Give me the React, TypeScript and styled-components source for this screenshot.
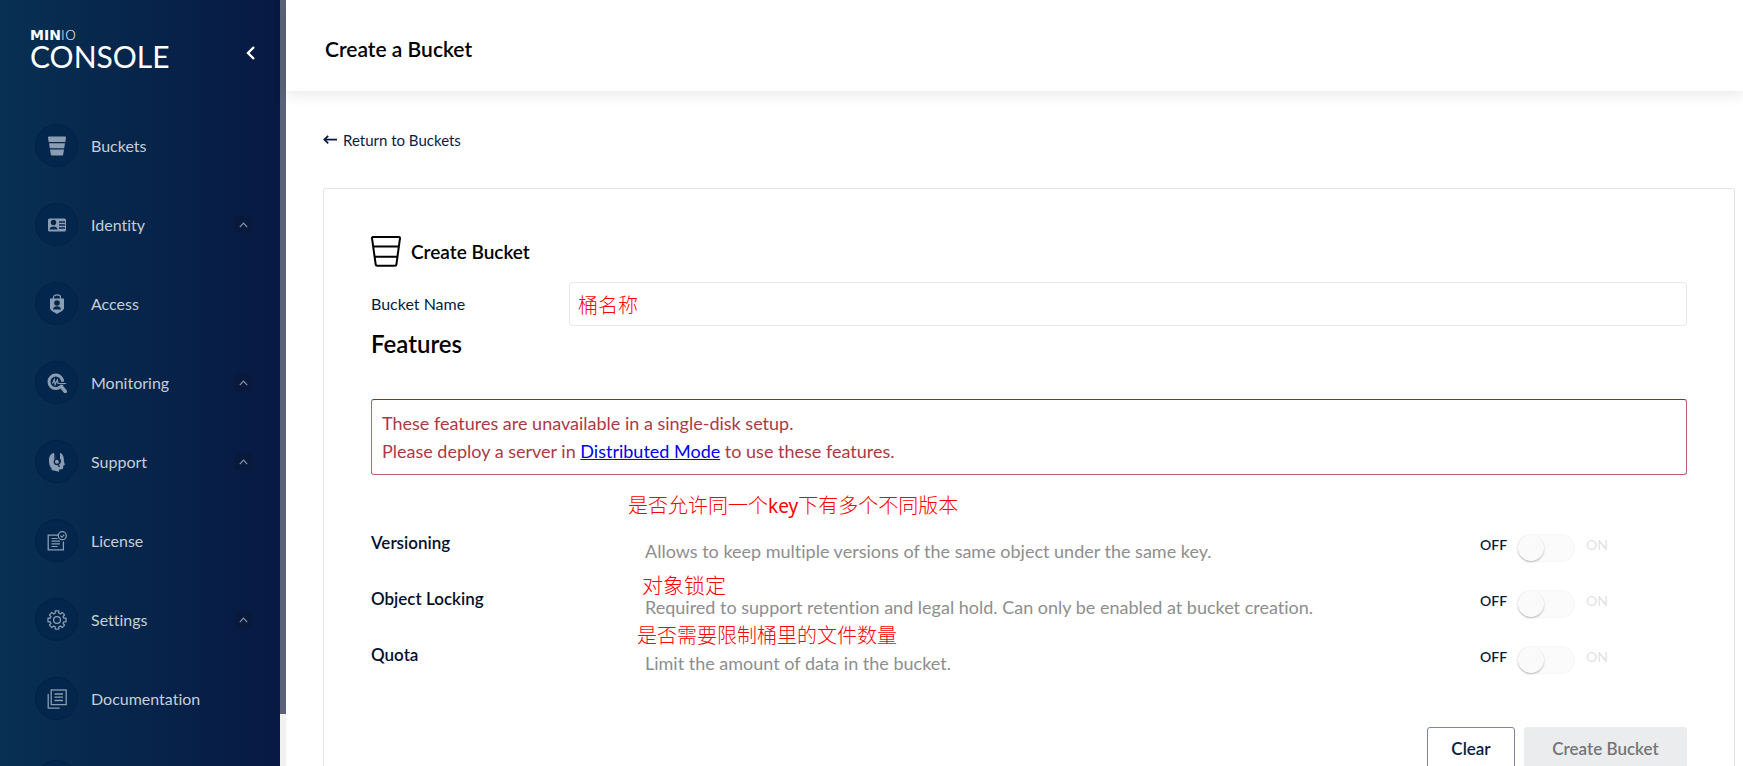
import React from 'react';
import styled, { createGlobalStyle } from 'styled-components';

const GlobalStyle = createGlobalStyle`
  *, *::before, *::after { box-sizing: border-box; }
  body {
    margin: 0;
    background: #fff;
    color: #000;
    font-family: Lato, "Noto Sans CJK SC", sans-serif;
    font-variant-ligatures: none;
  }
`;

const Shell = styled.div`
  display: flex;
  height: 100vh;
  overflow: hidden;
`;

/* ---------- Sidebar ---------- */

const Sidebar = styled.aside`
  display: flex;
  flex: 0 0 286px;
  overflow: hidden;
`;

const SidebarBody = styled.div`
  flex: 1;
  overflow: hidden;
  background: linear-gradient(90deg, #073052 0%, #071942 100%);
`;

const ScrollTrack = styled.div`
  width: 6px;
  background: #f1f1f1;
`;

const ScrollThumb = styled.div`
  height: 714px;
  max-height: 94%;
  background: #5c6279;
`;

const BrandBar = styled.div`
  display: flex;
  align-items: center;
  justify-content: space-between;
  height: 106px;
  padding: 0 21px 0 30px;
`;

const Brand = styled.div`
  display: flex;
  flex-direction: column;
  padding-bottom: 7px;
  color: #fff;
`;

const BrandTop = styled.span`
  font: 700 14px/13px "DejaVu Sans", sans-serif;
`;

const BrandThin = styled.span`
  font-weight: 200;
`;

const BrandName = styled.span`
  font-size: 30px;
  line-height: 28px;
`;

const CollapseButton = styled.button`
  display: flex;
  padding: 4px;
  border: 0;
  background: none;
  color: #fff;
`;

const Nav = styled.nav`
  display: flex;
  flex-direction: column;
`;

const NavItem = styled.a`
  display: flex;
  flex: 0 0 79px;
  align-items: center;
  gap: 13px;
  padding: 0 28px 0 35px;
  color: #c5ced9;
  font-size: 16px;
  line-height: 24px;
  text-decoration: none;

  &:last-child {
    margin-top: 4px;
  }
`;

const NavIcon = styled.span`
  display: flex;
  align-items: center;
  justify-content: center;
  width: 43px;
  height: 43px;
  border: 1px solid #032044;
  border-radius: 50%;
  background: #03264c;
  color: #8b9db2;
`;

const NavLabel = styled.span`
  flex: 1;
`;

const Expand = styled.span`
  display: flex;
  align-items: center;
  justify-content: center;
  width: 17px;
  height: 17px;
  border-radius: 2px;
  background: #08193c;
  color: #8795aa;
`;

/* ---------- Main column ---------- */

const Main = styled.main`
  display: flex;
  flex: 1;
  flex-direction: column;
  min-width: 0;
`;

const Header = styled.header`
  display: flex;
  flex: 0 0 91px;
  align-items: center;
  padding: 8px 39px 0;
  background: #fff;
  box-shadow: 0 3px 14px rgba(0, 0, 0, 0.1);
`;

const PageTitle = styled.h1`
  margin: 0;
  padding-bottom: 2px;
  font-size: 21px;
  font-weight: 600;
  line-height: 28px;
`;

const Content = styled.div`
  flex: 1;
  overflow: auto;
  padding: 38px 8px 38px 37px;
  scrollbar-width: none;
`;

const BackLink = styled.a`
  display: inline-flex;
  align-items: center;
  gap: 6px;
  color: #081c42;
  font-size: 15px;
  line-height: 22px;
  text-decoration: none;
`;

const Card = styled.form`
  margin-top: 37px;
  padding: 47px;
  border: 1px solid #e2e4e6;
  border-radius: 2px;
`;

const CardTitle = styled.h2`
  display: flex;
  align-items: center;
  gap: 10px;
  margin: 0 0 15px;
  font-size: 19px;
  font-weight: 600;
  line-height: 28px;
`;

const Field = styled.div`
  display: flex;
  align-items: center;
`;

const FieldLabel = styled.label`
  flex: 0 0 198px;
  color: #081c42;
  font-size: 16px;
  line-height: 24px;
`;

const TextInput = styled.input`
  flex: 1;
  min-width: 0;
  height: 44px;
  padding: 0 8px;
  border: 1px solid #e7e8ea;
  border-radius: 3px;
  background: #fff;
  color: #f00;
  font: 300 20px "Noto Sans CJK SC", sans-serif;
  outline: 0;
`;

const SectionTitle = styled.h3`
  margin: 3px 0 41px;
  font-size: 24px;
  font-weight: 600;
  line-height: 29px;
`;

const Alert = styled.div`
  padding: 9px 10px;
  border: 1px solid #c3606c;
  border-top-color: #a81f30;
  border-radius: 3px;
  color: #ab3a45;
  font-size: 18px;
  line-height: 28px;
`;

const AlertLine = styled.p`
  margin: 0;
`;

const AlertLink = styled.a`
  color: #00e;
`;

const FeatureList = styled.div`
  display: flex;
  flex-direction: column;
  margin-top: 52px;
`;

const FeatureRow = styled.div`
  position: relative;
  display: grid;
  grid-template-columns: 274px 1fr 207px;
  height: 56px;
`;

const FeatureLabel = styled.label`
  padding-top: 4px;
  color: #030f2b;
  font-size: 17px;
  font-weight: 600;
  line-height: 24px;
`;

const FeatureText = styled.p`
  margin: 0;
  padding-top: 10px;
  color: #8e8e8e;
  font-size: 18px;
  line-height: 28px;
`;

const Note = styled.span<{ $left: number; $top: number; $size: number }>`
  position: absolute;
  left: ${(p) => p.$left}px;
  top: ${(p) => p.$top}px;
  color: #f00;
  font: 300 ${(p) => p.$size}px/24px "Noto Sans CJK SC", sans-serif;
  white-space: nowrap;
`;

const NoteLatin = styled.span`
  font-family: "Noto Sans", sans-serif;
  font-weight: 400;
  font-size: 19px;
`;

const SwitchCell = styled.div`
  display: flex;
  align-items: flex-start;
  padding-top: 7px;
`;

const SwitchText = styled.span<{ $muted?: boolean }>`
  width: 37px;
  padding-top: 2px;
  color: ${(p) => (p.$muted ? '#e2e2e2' : '#081c42')};
  font-size: 14px;
  font-weight: ${(p) => (p.$muted ? 400 : 600)};
  line-height: 18px;
`;

const Switch = styled.input`
  appearance: none;
  display: flex;
  align-items: center;
  width: 58px;
  height: 28px;
  margin: 0 11px 0 0;
  border-radius: 14px;
  background: #fbfbfb;
  box-shadow: inset 0 0 3px rgba(0, 0, 0, 0.05);

  &::before {
    content: "";
    width: 26px;
    height: 26px;
    margin-left: 1px;
    border: 1px solid #fff;
    border-radius: 50%;
    background: #fafafa;
    box-shadow: 0 1px 2px rgba(0, 0, 0, 0.25);
  }
`;

const Actions = styled.div`
  display: flex;
  justify-content: flex-end;
  gap: 9px;
  margin-top: 32px;
`;

const ActionButton = styled.button<{ $primary?: boolean }>`
  height: 42px;
  width: ${(p) => (p.$primary ? 163 : 88)}px;
  padding: 0;
  border: 1px solid ${(p) => (p.$primary ? '#ebeced' : '#7c849f')};
  border-radius: 3px;
  background: ${(p) => (p.$primary ? '#ebeced' : '#fff')};
  color: ${(p) => (p.$primary ? '#757575' : '#081c42')};
  font-family: inherit;
  font-size: 17px;
  font-weight: 600;
`;

/* ---------- Icons ---------- */

const NavSvg = ({ children }: { children: React.ReactNode }) => (
  <svg width="20" height="20" viewBox="0 0 20 20" fill="none" stroke="currentColor" strokeWidth="1.3" aria-hidden="true">
    {children}
  </svg>
);

const BucketsIcon = () => (
  <NavSvg>
    <g fill="currentColor" stroke="none">
      <path d="M2 .5h16a1 1 0 0 1 1 1.200L18.300 6H1.700L1 1.700A1 1 0 0 1 2 .5Z" />
      <path d="M2 7.200h16l-.8 5H2.800Z" />
      <path d="M3 13.400h14l-.8 5a1.500 1.500 0 0 1-1.500 1.200H5.300a1.500 1.500 0 0 1-1.500-1.200Z" />
    </g>
  </NavSvg>
);

const IdentityIcon = () => (
  <NavSvg>
    <rect x="1" y="3.500" width="18" height="13" rx="1.500" fill="currentColor" stroke="none" />
    <g fill="#03264c" stroke="none">
      <circle cx="6.500" cy="7.500" r="2.700" />
      <path d="M2.500 14.500c0-4 8-4 8 0Z" />
    </g>
    <path d="M12 7h6M12 10h6M12 13h6" stroke="#03264c" />
  </NavSvg>
);

const AccessIcon = () => (
  <NavSvg>
    <path d="M6.500 5V3.500C6.500 0 13.500 0 13.500 3.500V5" />
    <path d="M3 4.500h14v9.500c0 2.500-4 4-7 6-3-2-7-3.500-7-6Z" fill="currentColor" stroke="none" />
    <g fill="#03264c" stroke="none">
      <circle cx="10" cy="9" r="2.800" />
      <path d="M6 15.500c0-4.500 8-4.500 8 0Z" />
    </g>
  </NavSvg>
);

const MonitoringIcon = () => (
  <NavSvg>
    <circle cx="8.800" cy="8.800" r="6.800" strokeWidth="3" />
    <path d="M15 14.500l3.300 4" strokeWidth="3.600" strokeLinecap="round" />
    <path d="M11 10.200h8.500" stroke="#03264c" strokeWidth="3" />
    <path d="M5.500 10.500l1.800-4 .8 5 2.200-4.500.8 3.500h8" strokeWidth="1.200" />
  </NavSvg>
);

const SupportIcon = () => (
  <NavSvg>
    <path
      d="M7 .8C3.200 2 1.800 5 2 9c0 3 .8 5.500 2.600 7.500v1.500l7.500 1.800v-2.300l3.800-.5.500-3.500 1.500-.8-1-3.500C17.200 5.500 16 2 13 .8v5.600A4.500 4.500 0 0 1 14 9.500l-1 2.500 1.500 2.500M7 .8v5.600A4.500 4.500 0 0 0 10 14"
      fill="currentColor"
      stroke="none"
    />
    <path d="M7.800 0v7M12.200 0v7" stroke="#03264c" strokeWidth="1" />
    <path d="M8.200 0h3.600v7H8.200Z" fill="#03264c" stroke="none" />
    <circle cx="10" cy="9.800" r="2.700" stroke="#03264c" />
    <path d="M11 12.500l1.500 2.500" stroke="#03264c" />
  </NavSvg>
);

const LicenseIcon = () => (
  <NavSvg>
    <path d="M11 4.200H1.200v14.600h15.200V10.500" />
    <path d="M4.500 7.500h6M4.500 10.200h8.500M4.500 12.900h8.500M4.500 15.500h6" strokeWidth="1.200" />
    <circle cx="15.300" cy="4.700" r="4" />
    <path d="M13.500 4.700l1.400 1.400 2.400-2.500" strokeWidth="1.100" />
  </NavSvg>
);

const gearPath = (() => {
  const teeth = 8;
  const points: string[] = [];
  for (let i = 0; i < teeth; i += 1) {
    const mid = (i * 2 * Math.PI) / teeth;
    [[-0.27, 7], [-0.19, 9.2], [0.19, 9.2], [0.27, 7]].forEach(([offset, radius]) => {
      const x = 10 + radius * Math.sin(mid + offset);
      const y = 10 - radius * Math.cos(mid + offset);
      points.push(`${x.toFixed(2)} ${y.toFixed(2)}`);
    });
  }
  return `M${points.join('L')}Z`;
})();

const SettingsIcon = () => (
  <NavSvg>
    <path d={gearPath} strokeLinejoin="round" />
    <circle cx="10" cy="10" r="3.400" />
  </NavSvg>
);

const DocumentationIcon = () => (
  <NavSvg>
    <rect x="4.200" y="1" width="15" height="14.600" />
    <path d="M1.200 5v14.200h11.500" />
    <path d="M7.500 5h8.500M7.500 8.200h8.500M7.500 11.500h8.500" />
  </NavSvg>
);

const ChevronUp = () => (
  <svg width="9" height="6" viewBox="0 0 9 6" fill="none" stroke="currentColor" strokeWidth="1.200" aria-hidden="true">
    <path d="M.8 5.200L4.500 1.200l3.700 4" />
  </svg>
);

const ChevronLeft = () => (
  <svg width="9" height="14" viewBox="0 0 9 14" fill="none" stroke="currentColor" strokeWidth="2.400" aria-hidden="true">
    <path d="M8 1L2 7l6 6" />
  </svg>
);

const BackArrow = () => (
  <svg width="14" height="10" viewBox="0 0 14 10" fill="none" stroke="currentColor" strokeWidth="1.800" aria-hidden="true">
    <path d="M14 4.600H1.500" />
    <path d="M5.200 .9L1.400 4.600l3.800 3.700" />
  </svg>
);

const BucketOutline = () => (
  <svg width="30" height="31" viewBox="0 0 30 31" fill="none" stroke="currentColor" strokeWidth="2" strokeLinejoin="round" aria-hidden="true">
    <path d="M2 1h26a1 1 0 0 1 1 1.200L25.400 28.500a1.500 1.500 0 0 1-1.500 1.300H6.200a1.500 1.500 0 0 1-1.500-1.300L1 2.200A1 1 0 0 1 2 1Z" />
    <path d="M2.500 10.500h25M4 20.800h22" />
  </svg>
);

/* ---------- Page ---------- */

const navItems = [
  { label: 'Buckets', Icon: BucketsIcon, expandable: false },
  { label: 'Identity', Icon: IdentityIcon, expandable: true },
  { label: 'Access', Icon: AccessIcon, expandable: false },
  { label: 'Monitoring', Icon: MonitoringIcon, expandable: true },
  { label: 'Support', Icon: SupportIcon, expandable: true },
  { label: 'License', Icon: LicenseIcon, expandable: false },
  { label: 'Settings', Icon: SettingsIcon, expandable: true },
  { label: 'Documentation', Icon: DocumentationIcon, expandable: false },
];

const features = [
  {
    id: 'versioning',
    label: 'Versioning',
    text: 'Allows to keep multiple versions of the same object under the same key.',
    note: { left: 257, top: -34, size: 20, body: <>是否允许同一个<NoteLatin>key</NoteLatin>下有多个不同版本</> },
  },
  {
    id: 'locking',
    label: 'Object Locking',
    text: 'Required to support retention and legal hold. Can only be enabled at bucket creation.',
    note: { left: 271, top: -11, size: 21, body: <>对象锁定</> },
  },
  {
    id: 'quota',
    label: 'Quota',
    text: 'Limit the amount of data in the bucket.',
    note: { left: 266, top: -16, size: 20, body: <>是否需要限制桶里的文件数量</> },
  },
];

export default function App() {
  return (
    <>
      <GlobalStyle />
      <Shell>
        <Sidebar>
          <SidebarBody>
            <BrandBar>
              <Brand>
                <BrandTop>MIN<BrandThin>IO</BrandThin></BrandTop>
                <BrandName>CONSOLE</BrandName>
              </Brand>
              <CollapseButton type="button" aria-label="Collapse menu">
                <ChevronLeft />
              </CollapseButton>
            </BrandBar>
            <Nav>
              {navItems.map(({ label, Icon, expandable }) => (
                <NavItem href="#" key={label}>
                  <NavIcon><Icon /></NavIcon>
                  <NavLabel>{label}</NavLabel>
                  {expandable && <Expand><ChevronUp /></Expand>}
                </NavItem>
              ))}
              <NavItem href="#" aria-label="Logout">
                <NavIcon />
              </NavItem>
            </Nav>
          </SidebarBody>
          <ScrollTrack>
            <ScrollThumb />
          </ScrollTrack>
        </Sidebar>

        <Main>
          <Header>
            <PageTitle>Create a Bucket</PageTitle>
          </Header>
          <Content>
            <BackLink href="#">
              <BackArrow />
              Return to Buckets
            </BackLink>
            <Card>
              <CardTitle>
                <BucketOutline />
                Create Bucket
              </CardTitle>
              <Field>
                <FieldLabel htmlFor="bucket-name">Bucket Name</FieldLabel>
                <TextInput id="bucket-name" type="text" defaultValue="桶名称" />
              </Field>
              <SectionTitle>Features</SectionTitle>
              <Alert>
                <AlertLine>These features are unavailable in a single-disk setup.</AlertLine>
                <AlertLine>
                  Please deploy a server in <AlertLink href="#">Distributed Mode</AlertLink> to use these features.
                </AlertLine>
              </Alert>
              <FeatureList>
                {features.map(({ id, label, text, note }) => (
                  <FeatureRow key={id}>
                    <FeatureLabel htmlFor={id}>{label}</FeatureLabel>
                    <FeatureText>{text}</FeatureText>
                    <SwitchCell>
                      <SwitchText>OFF</SwitchText>
                      <Switch id={id} type="checkbox" role="switch" disabled />
                      <SwitchText $muted>ON</SwitchText>
                    </SwitchCell>
                    <Note $left={note.left} $top={note.top} $size={note.size}>{note.body}</Note>
                  </FeatureRow>
                ))}
              </FeatureList>
              <Actions>
                <ActionButton type="reset">Clear</ActionButton>
                <ActionButton type="submit" $primary disabled>Create Bucket</ActionButton>
              </Actions>
            </Card>
          </Content>
        </Main>
      </Shell>
    </>
  );
}
